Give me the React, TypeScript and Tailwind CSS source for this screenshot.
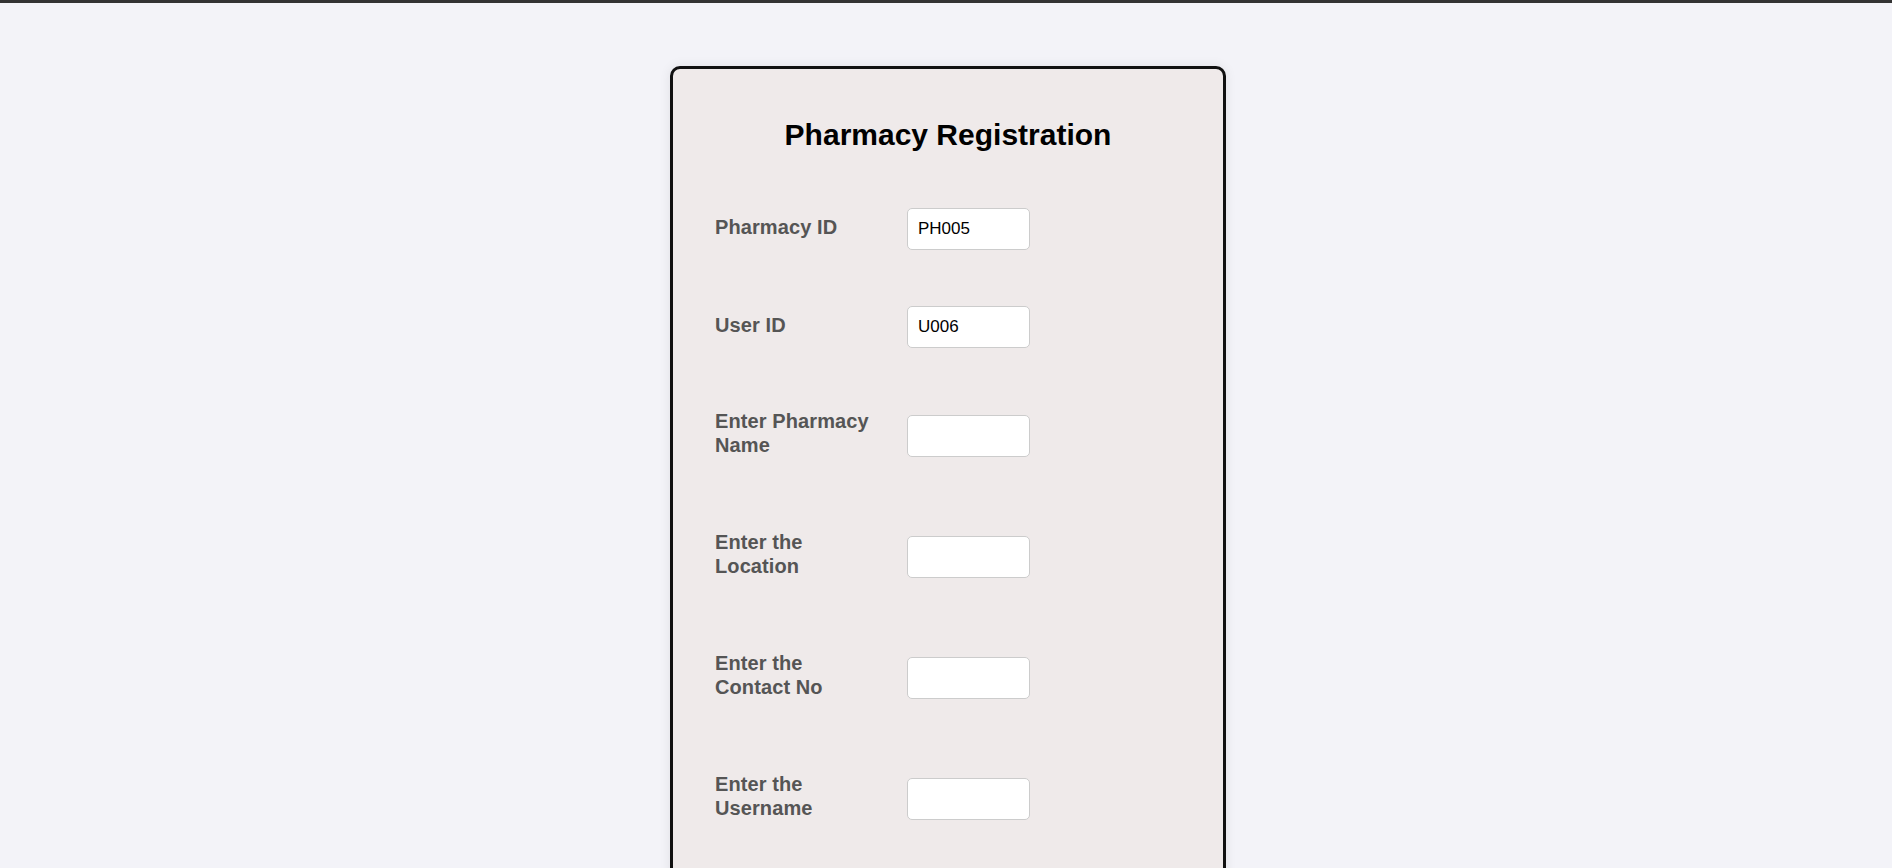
import React from "react";

const fields = [
  { label: "Pharmacy ID", value: "PH005", gap: "mt-[56px]" },
  { label: "User ID", value: "U006", gap: "mt-[56px]" },
  { label: "Enter Pharmacy Name", value: "", gap: "mt-[61px]" },
  { label: "Enter the Location", value: "", gap: "mt-[68px]" },
  { label: "Enter the Contact No", value: "", gap: "mt-[68px]" },
  { label: "Enter the Username", value: "", gap: "mt-[68px]" },
  { label: "Enter the Password", value: "", gap: "mt-[68px]" },
];

export default function App() {
  return (
    <div className="min-h-screen bg-[#f3f3f8] border-t-[3px] border-[#333333] font-['Liberation_Sans',Arial,sans-serif]">
      <div className="flex justify-center pl-[4px] pt-[63px] pb-10">
        <div className="w-[556px] rounded-[10px] border-[3px] border-[#111111] bg-[#efeaea] px-[42px] pt-[49px] pb-[60px] shadow-[0_0_12px_rgba(0,0,0,0.08)]">
          <h2 className="text-center text-[30px] font-bold leading-[34px] text-black">
            Pharmacy Registration
          </h2>

          {/* Form rows */}
          <form>
            {fields.map((f) => (
              <div key={f.label} className={`flex items-center ${f.gap}`}>
                <label className="w-[165px] shrink-0 mb-[5px] text-[20px] font-bold leading-[24px] tracking-[0.1px] text-[#555555]">
                  {f.label}
                </label>
                <input
                  type="text"
                  defaultValue={f.value}
                  className="ml-[27px] h-[42px] w-[123px] rounded-[5px] border border-[#cccccc] bg-white px-[10px] text-[17px] text-black outline-none"
                />
              </div>
            ))}

            <div className="mt-[60px] flex justify-center">
              <button
                type="button"
                className="rounded-[5px] bg-[#333333] px-6 py-2 text-[18px] font-bold text-white"
              >
                Register
              </button>
            </div>
          </form>
        </div>
      </div>
    </div>
  );
}
